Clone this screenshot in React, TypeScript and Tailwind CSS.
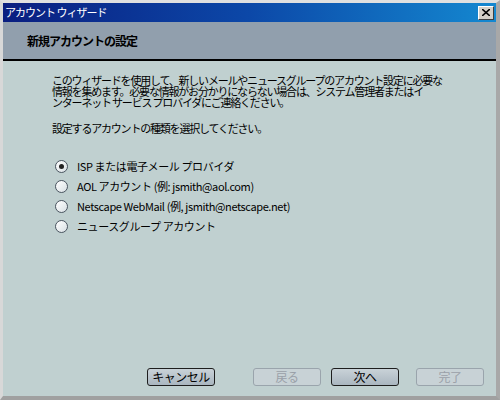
const jp = { fontFamily: '"MS UI Gothic", "Noto Sans CJK JP", "Liberation Sans", sans-serif' };

function Radio({ checked, label }: { checked?: boolean; label: string }) {
  return (
    <label className="flex h-[20px] items-center gap-[9px]">
      <span className="flex h-[13px] w-[13px] items-center justify-center rounded-full border border-[#4a5560] bg-[linear-gradient(135deg,#ffffff,#d8e0e4)]">
        {checked && <span className="h-[5px] w-[5px] rounded-full bg-[#222]" />}
      </span>
      <span className="text-[11px] leading-none tracking-[-0.4px] text-black">{label}</span>
    </label>
  );
}

function WizButton({ label, disabled }: { label: string; disabled?: boolean }) {
  return (
    <button
      className={
        "flex h-[18px] w-[68px] items-center justify-center rounded-[3px] border text-[12px] leading-none tracking-[-0.5px] " +
        (disabled
          ? "border-[#9aa4ac] bg-[#c8d2d6] text-[#9aa0a8]"
          : "border-[#1e1e1e] bg-[linear-gradient(#c9d2d8,#aab6c0)] text-black")
      }
    >
      {label}
    </button>
  );
}

export default function App() {
  return (
    <div className="flex h-[400px] w-[500px] flex-col border-l-[3px] border-r-[4px] border-b-[4px] border-t-[3px] border-l-[#d8d8d8] border-r-[#a8a8a8] border-b-[#a0a0a0] border-t-[#e0e0e0] bg-[#c0d0d0]" style={jp}>
      <div className="flex h-[19px] items-center justify-between bg-[linear-gradient(90deg,#0a1e80,#0c48a8_50%,#1488d0)] pl-[2px] pr-[2px]">
        <span className="text-[11px] leading-none tracking-[-1px] text-white">アカウント ウィザード</span>
        <span className="flex h-[14px] w-[16px] items-center justify-center border border-b-[#404040] border-l-white border-r-[#404040] border-t-white bg-[#d4d0c8]">
          <svg width="8" height="7" viewBox="0 0 8 7">
            <path d="M0 0L8 7M8 0L0 7" stroke="black" strokeWidth="1.6" />
          </svg>
        </span>
      </div>
      <div className="flex h-[39px] items-center border-b-[2px] border-b-black bg-[#919fad] pl-[24px]">
        <span className="text-[12px] font-bold leading-none tracking-[-1px] text-black">新規アカウントの設定</span>
      </div>
      <div className="flex flex-1 flex-col pl-[49px] pt-[14px]">
        <p className="whitespace-nowrap text-[11px] leading-[11px] tracking-[-1.2px] text-black">
          このウィザードを使用して、新しいメールやニュースグループのアカウント設定に必要な
          <br />
          情報を集めます。必要な情報がお分かりにならない場合は、システム管理者またはイ
          <br />
          ンターネット サービス プロバイダにご連絡ください。
        </p>
        <p className="mt-[14px] whitespace-nowrap text-[11px] leading-[12px] tracking-[-1.2px] text-black">
          設定するアカウントの種類を選択してください。
        </p>
        <div className="mt-[22px] flex flex-col pl-[3px]">
          <Radio checked label="ISP または電子メール プロバイダ" />
          <Radio label="AOL アカウント (例: jsmith@aol.com)" />
          <Radio label="Netscape WebMail (例, jsmith@netscape.net)" />
          <Radio label="ニュースグループ アカウント" />
        </div>
        <div className="mt-auto mb-[10px] flex items-center pl-[95px]">
          <WizButton label="キャンセル" />
          <div className="ml-[38px] flex gap-[10px]">
            <WizButton label="戻る" disabled />
            <WizButton label="次へ" />
          </div>
          <div className="ml-[17px]">
            <WizButton label="完了" disabled />
          </div>
        </div>
      </div>
    </div>
  );
}
